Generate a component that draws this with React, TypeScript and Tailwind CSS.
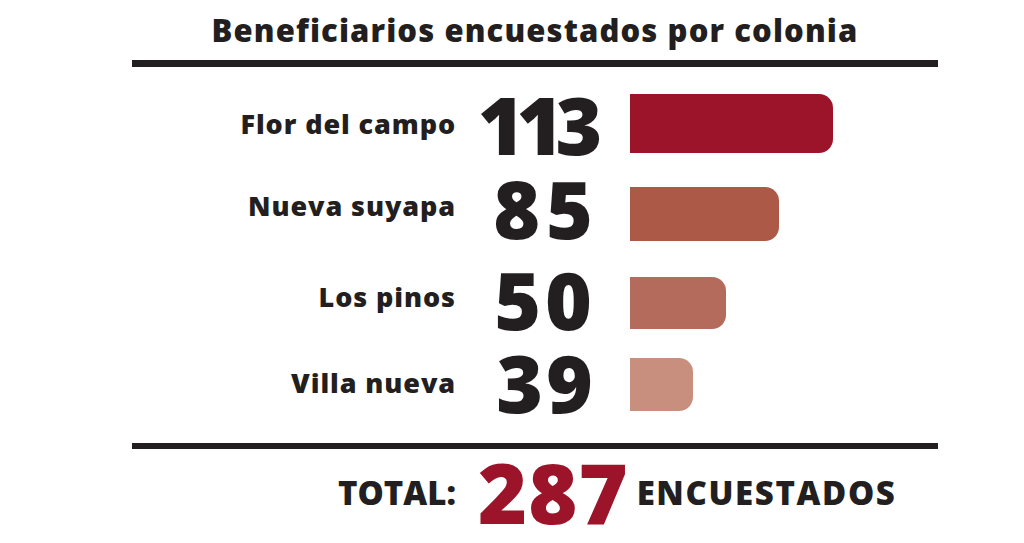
import React from "react";

const rows = [
  { label: "Flor del campo", value: 113, width: 203, height: 59, mt: 27, color: "bg-[#9c1429]", num: "tracking-[-8px] pr-[14px]", numUp: 0, labelUp: 0 },
  { label: "Nueva suyapa", value: 85, width: 149, height: 54, mt: 34, color: "bg-[#ad5948]", num: "tracking-[6px] pl-[6px]", numUp: 6, labelUp: 8 },
  { label: "Los pinos", value: 50, width: 96, height: 52, mt: 36, color: "bg-[#b56b5b]", num: "tracking-[4px] pl-[4px]", numUp: 4, labelUp: 6 },
  { label: "Villa nueva", value: 39, width: 63, height: 53, mt: 29, color: "bg-[#c98f7e]", num: "tracking-[3px] pl-[6px]", numUp: 3, labelUp: 2 },
];

export default function App() {
  return (
    <div className="h-[543px] w-[1024px] overflow-hidden bg-white font-['Open_Sans','Lato',sans-serif] text-[#231f20]">
      <div className="ml-[132px] w-[806px]">
        <div className="flex h-[60px] items-center justify-center">
          <h1 className="text-[31px] font-extrabold leading-none tracking-[1.1px]">
            Beneficiarios encuestados por colonia
          </h1>
        </div>
        <div className="h-[7px] bg-[#231f20]" />

        {rows.map((r) => (
          <div
            key={r.label}
            className="grid grid-cols-[324px_174px_1fr] items-center"
            style={{ height: r.height, marginTop: r.mt }}
          >
            <span
              className="text-right text-[27px] font-extrabold leading-[30px] tracking-[0.9px]"
              style={{ marginBottom: r.labelUp * 2 }}
            >
              {r.label}
            </span>
            <span
              className={`text-center text-[80px] font-extrabold leading-[40px] ${r.num}`}
              style={{ marginBottom: r.numUp * 2 }}
            >
              {r.value}
            </span>
            <div className={`h-full rounded-r-[14px] ${r.color}`} style={{ width: r.width }} />
          </div>
        ))}

        <div className="mt-[32px] h-[6px] bg-[#231f20]" />

        <div className="mt-[13px] flex h-[60px] items-center pl-[206px]">
          <span className="text-[33px] font-extrabold leading-none">TOTAL:</span>
          <span className="ml-[22px] text-[84px] font-extrabold leading-[60px] tracking-[1px] text-[#9c1429]">287</span>
          <span className="ml-[8px] text-[33px] font-extrabold leading-none tracking-[1.6px]">ENCUESTADOS</span>
        </div>
      </div>
    </div>
  );
}
